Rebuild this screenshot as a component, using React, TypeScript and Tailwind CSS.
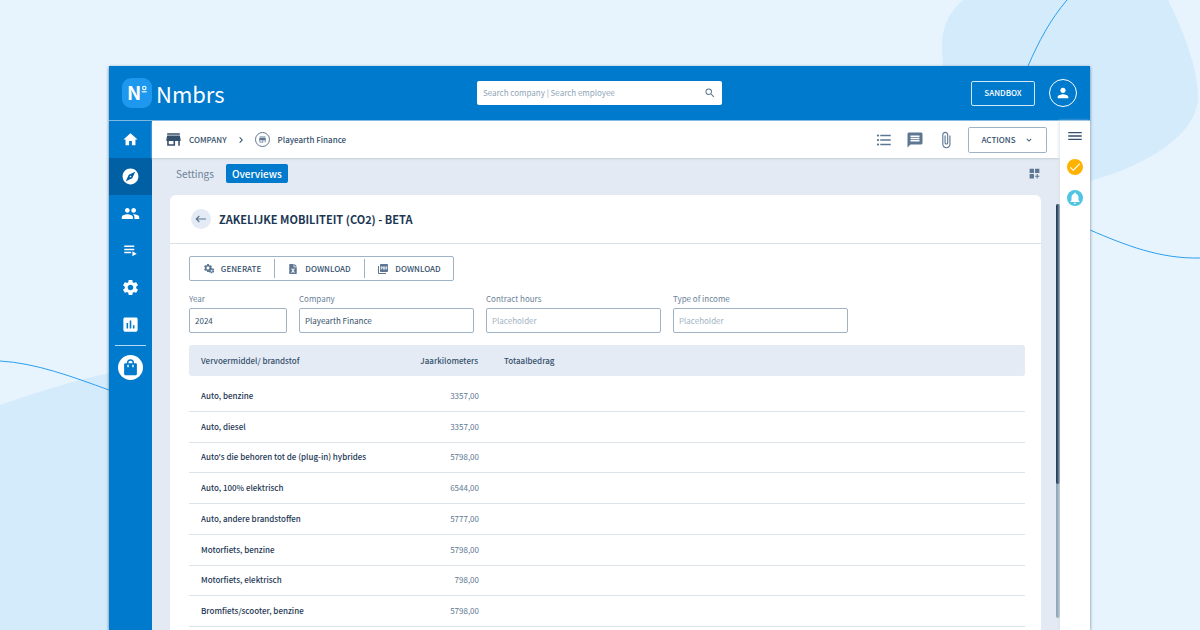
import * as React from "react";
import { clsx } from "clsx";
import {
  MdAssessment, MdAttachFile, MdCheck, MdChevronRight, MdDashboardCustomize, MdExplore,
  MdFormatListBulleted, MdHome, MdKeyboardArrowDown, MdMenu, MdMessage, MdNotifications, MdPeople,
  MdPerson, MdPictureAsPdf, MdSearch, MdSettings, MdStore,
} from "react-icons/md";
import { FaFileExcel } from "react-icons/fa";

const rows = [
  { name: "Auto, benzine", km: "3357,00" },
  { name: "Auto, diesel", km: "3357,00" },
  { name: "Auto's die behoren tot de (plug-in) hybrides", km: "5798,00" },
  { name: "Auto, 100% elektrisch", km: "6544,00" },
  { name: "Auto, andere brandstoffen", km: "5777,00" },
  { name: "Motorfiets, benzine", km: "5798,00" },
  { name: "Motorfiets, elektrisch", km: "798,00" },
  { name: "Bromfiets/scooter, benzine", km: "5798,00" },
];

function PlaylistIcon({ className }: { className?: string }) {
  return (
    <svg viewBox="0 0 24 24" fill="currentColor" className={className}>
      <path d="M18 9H2v2.500h16V9zm0-5H2v2.500h16V4zM2 14v2.500h11V14H2zm13-1v8l7-4-7-4z" />
    </svg>
  );
}

function BagIcon({ className }: { className?: string }) {
  return (
    <svg viewBox="0 0 24 24" fill="currentColor" fillRule="evenodd" className={className}>
      <path d="M7 6V5.500a5 5 0 0 1 10 0V6h2.500A1.500 1.500 0 0 1 21 7.500V21a2 2 0 0 1-2 2H5a2 2 0 0 1-2-2V7.500A1.500 1.500 0 0 1 4.500 6H7zm2 0h6V5.500a3 3 0 0 0-6 0V6zM7.500 8v3.500h2V8h-2zm7 0v3.500h2V8h-2z" />
    </svg>
  );
}

function CogsIcon({ className }: { className?: string }) {
  return (
    <span className={clsx("relative block", className)}>
      <MdSettings className="h-[10px] w-[10px]" />
      <MdSettings className="absolute right-0 bottom-0 h-[7px] w-[7px]" />
    </span>
  );
}

function BackIcon({ className }: { className?: string }) {
  return (
    <svg viewBox="0 0 12 12" fill="none" stroke="currentColor" strokeWidth="1.2" className={className}>
      <path d="M11 6H1.500M4.300 3L1.300 6L4.300 9" />
    </svg>
  );
}

const nav = [
  { label: "Home", icon: MdHome, size: "h-[17px] w-[17px]" },
  { label: "Explore", icon: MdExplore, size: "h-[19px] w-[19px]", active: true },
  { label: "Employees", icon: MdPeople, size: "h-[19px] w-[19px]" },
  { label: "Runs", icon: PlaylistIcon, size: "h-[15px] w-[15px]" },
  { label: "Settings", icon: MdSettings, size: "h-[19px] w-[19px]" },
  { label: "Reports", icon: MdAssessment, size: "h-[19px] w-[19px]" },
];

function Backdrop() {
  return (
    <svg viewBox="0 0 1200 630" preserveAspectRatio="xMidYMid slice" className="absolute inset-0 h-full w-full" aria-hidden="true">
      <path d="M963 0C948 13 942 28 942 45C942 90 955 150 1000 175C1030 191 1062 189 1090 181C1145 166 1198 135 1198 97C1198 72 1187 38 1168 0Z" fill="#d4ebfc" />
      <path d="M0 405C35 393 72 381 109 373L200 360V630H0Z" fill="#d4ebfc" />
      <path d="M1067 0C1050 20 1039 41 1028 66" stroke="#2b9ff0" fill="none" />
      <path d="M1090 230C1125 245 1160 259 1200 258" stroke="#2b9ff0" fill="none" />
      <path d="M0 361C36 363 73 377 109 390" stroke="#2b9ff0" fill="none" />
    </svg>
  );
}

function Header() {
  return (
    <header className="flex h-[55px] shrink-0 items-center justify-between border-b border-[#7db8e3] bg-[#007acd] px-[13px] text-white">
      <div className="flex flex-1 items-center gap-1">
        <svg viewBox="0 0 30 30" className="h-[30px] w-[30px]" role="img" aria-label="Nmbrs">
          <rect width="30" height="30" rx="9" fill="#1e97ee" />
          <text x="5" y="22" fontSize="19" fontWeight="700" fill="#fff">N</text>
          <circle cx="22.300" cy="10" r="1.700" fill="none" stroke="#fff" strokeWidth="1.100" />
          <path d="M19.800 13.800h5" stroke="#fff" strokeWidth="1.100" />
        </svg>
        <span className="text-[22px] leading-[30px]">Nmbrs</span>
      </div>
      <div className="flex h-6 w-[245px] items-center rounded-[2px] bg-white px-[6px] text-[#5d7793]">
        <input aria-label="Search" placeholder="Search company | Search employee" className="min-w-0 flex-1 text-[8px] leading-4 outline-none placeholder:text-[#8fa5b7]" />
        <button type="button" aria-label="Search"><MdSearch className="h-3 w-3" /></button>
      </div>
      <div className="flex flex-1 items-center justify-end gap-[14px]">
        <button type="button" className="h-[25px] w-16 rounded-[2px] border border-[#cfe6f7] text-[8px] leading-4 font-medium">SANDBOX</button>
        <button type="button" aria-label="Account" className="flex h-7 w-7 items-center justify-center rounded-full border border-white">
          <MdPerson className="h-4 w-4" />
        </button>
      </div>
    </header>
  );
}

function Sidebar() {
  return (
    <nav className="flex w-[43px] shrink-0 flex-col items-center bg-[#007acd] text-white">
      {nav.map(({ label, icon: Icon, size, active }) => (
        <a key={label} href="#" aria-label={label} className={clsx("flex h-[37px] w-full shrink-0 items-center justify-center", active && "bg-[#0060a3]")}>
          <Icon className={size} />
        </a>
      ))}
      <div className="mt-[2px] h-px w-[31px] bg-[#b5daf3]" />
      <a href="#" aria-label="Store" className="mt-[9px] flex h-[25px] w-[25px] items-center justify-center rounded-full bg-white text-[#007acd]">
        <BagIcon className="h-[17px] w-[17px]" />
      </a>
    </nav>
  );
}

function TopBar() {
  return (
    <div className="flex h-[37px] shrink-0 items-center bg-white pr-[13px] pl-3 text-[#34506c] shadow-[0_1px_2px_#c3ceda]">
      <MdStore className="h-[19px] w-[19px]" />
      <a href="#" className="ml-[6px] text-[8px] leading-4 font-medium">COMPANY</a>
      <MdChevronRight className="mx-2 h-3 w-3" />
      <span className="flex h-[15px] w-[15px] items-center justify-center rounded-full border border-[#5d7793] text-[#5d7793]"><MdStore className="h-[9px] w-[9px]" /></span>
      <span className="ml-2 flex-1 text-[8px] leading-4 font-medium">Playearth Finance</span>
      <div className="flex items-center gap-[13px] text-[#5d7793]">
        <button type="button" aria-label="List"><MdFormatListBulleted className="h-[18px] w-[18px]" /></button>
        <button type="button" aria-label="Messages"><MdMessage className="h-[18px] w-[18px]" /></button>
        <button type="button" aria-label="Attachments"><MdAttachFile className="h-[18px] w-[18px]" /></button>
        <button type="button" className="flex h-[26px] w-[79px] items-center justify-center gap-2 rounded-[2px] border border-[#9fb3c5] text-[8px] leading-4 font-medium text-[#34506c]">
          ACTIONS
          <MdKeyboardArrowDown className="h-[10px] w-[10px]" />
        </button>
      </div>
    </div>
  );
}

function Field({ id, label, value, className }: { id: string; label: string; value?: string; className: string }) {
  return (
    <div className={clsx("flex flex-col", className)}>
      <label htmlFor={id} className="text-[8px] leading-4 text-[#6b8299]">{label}</label>
      <input id={id} defaultValue={value} placeholder="Placeholder" className="mt-px h-[25px] w-full rounded-[2px] border border-[#9fb3c5] px-[5px] text-[8px] leading-4 text-[#34506c] placeholder:text-[#9fb3c5]" />
    </div>
  );
}

function ToolButton({ icon, className, children }: { icon: React.ReactNode; className: string; children: React.ReactNode }) {
  return (
    <button type="button" className={clsx("flex h-[19px] items-center justify-center text-[8px] leading-4 font-medium text-[#34506c]", className)}>
      <span className="text-[#5d7793]">{icon}</span>
      {children}
    </button>
  );
}

function MobilityTable() {
  return (
    <table className="mt-3 h-[282px] w-full table-fixed border-separate border-spacing-0 text-[8px] leading-4">
      <colgroup>
        <col className="w-[200px]" />
        <col className="w-[90px]" />
        <col />
      </colgroup>
      <thead className="text-[#34506c]">
        <tr className="h-[31px] bg-[#e4ebf4]">
          <th className="rounded-l-[3px] pl-3 text-left font-medium">Vervoermiddel/ brandstof</th>
          <th className="pr-px text-right font-medium">Jaarkilometers</th>
          <th className="rounded-r-[3px] pl-[25px] text-left font-medium">Totaalbedrag</th>
        </tr>
        <tr className="h-[5px]"><td colSpan={3} className="h-[5px]" /></tr>
      </thead>
      <tbody>
        {rows.map((r) => (
          <tr key={r.name}>
            <td className="border-b border-[#dce4ea] pl-3 font-medium whitespace-nowrap text-[#1c3754]">{r.name}</td>
            <td className="border-b border-[#dce4ea] text-right text-[#5d7793]">{r.km}</td>
            <td className="border-b border-[#dce4ea]" />
          </tr>
        ))}
      </tbody>
    </table>
  );
}

function Rail() {
  return (
    <aside className="z-10 flex w-[30px] shrink-0 flex-col items-center gap-[15px] bg-white pt-[7px] shadow-[-1px_0_3px_#dbe1ea]">
      <button type="button" aria-label="Menu" className="text-[#34506c]"><MdMenu className="h-4 w-[18px]" preserveAspectRatio="none" /></button>
      <button type="button" aria-label="Tasks" className="flex h-4 w-4 items-center justify-center rounded-full bg-[#ffb300] text-white"><MdCheck className="h-[14px] w-[14px]" /></button>
      <button type="button" aria-label="Notifications" className="flex h-4 w-4 items-center justify-center rounded-full bg-[#4fc5e3] text-white"><MdNotifications className="h-[14px] w-[14px]" /></button>
    </aside>
  );
}

export default function App() {
  return (
    <div className="relative flex h-screen flex-col overflow-hidden bg-[#e7f4fd] pt-[66px] pr-[110px] pl-[109px] font-['Noto_Sans_CJK_SC',sans-serif]">
      <Backdrop />
      <div className="relative flex min-h-0 flex-1 flex-col shadow-[0_1px_3px_#5b7488]">
        <Header />
        <div className="flex min-h-0 flex-1">
          <Sidebar />
          <div className="flex min-w-0 flex-1 flex-col bg-[#e4eaf3]">
            <TopBar />
            <div className="flex min-h-0 flex-1">
              <main className="flex min-w-0 flex-1 flex-col pr-[15px] pl-[18px]">
                <div className="mt-[6px] flex h-[19px] shrink-0 items-center gap-3 pl-[6px] text-[10px] leading-[19px]">
                  <a href="#" className="text-[#6b8299]">Settings</a>
                  <a href="#" className="h-[19px] rounded-[2px] bg-[#007acd] px-[6px] font-medium text-white">Overviews</a>
                  <button type="button" aria-label="Customize" className="ml-auto text-[#5d7793]"><MdDashboardCustomize className="h-[13px] w-[13px]" /></button>
                </div>
                <section className="mt-3 min-h-0 flex-1 overflow-hidden rounded-t-[6px] bg-white">
                  <div className="flex h-[49px] items-center gap-2 border-b border-[#d8e1ea] pl-[21px]">
                    <button type="button" aria-label="Back" className="flex h-5 w-5 items-center justify-center rounded-full bg-[#e4ebf4] text-[#5d7793]"><BackIcon className="h-3 w-3" /></button>
                    <h1 className="text-[11px] leading-5 font-bold text-[#1c3754]">ZAKELIJKE MOBILITEIT (CO2) - BETA</h1>
                  </div>
                  <div className="pt-3 pr-4 pl-[19px]">
                    <div className="flex h-[25px] w-fit items-center divide-x divide-[#9fb3c5] rounded-[2px] border border-[#9fb3c5]">
                      <ToolButton icon={<CogsIcon className="h-[11px] w-[12px]" />} className="w-[85px] gap-[6px]">GENERATE</ToolButton>
                      <ToolButton icon={<FaFileExcel className="h-[10px] w-[10px]" />} className="w-[90px] gap-[7px]">DOWNLOAD</ToolButton>
                      <ToolButton icon={<MdPictureAsPdf className="h-3 w-3" />} className="w-[88px] gap-[6px]">DOWNLOAD</ToolButton>
                    </div>
                    <div className="mt-[10px] flex gap-3">
                      <Field id="year" label="Year" value="2024" className="w-[98px]" />
                      <Field id="company" label="Company" value="Playearth Finance" className="w-[175px]" />
                      <Field id="hours" label="Contract hours" className="w-[175px]" />
                      <Field id="income" label="Type of income" className="w-[175px]" />
                    </div>
                    <MobilityTable />
                  </div>
                </section>
              </main>
              <div className="mt-[46px] mb-3 flex w-1 shrink-0 flex-col rounded-full bg-[#8ba3b3]">
                <div className="h-[280px] rounded-full bg-[#1c3754]" />
              </div>
            </div>
          </div>
          <Rail />
        </div>
      </div>
    </div>
  );
}
